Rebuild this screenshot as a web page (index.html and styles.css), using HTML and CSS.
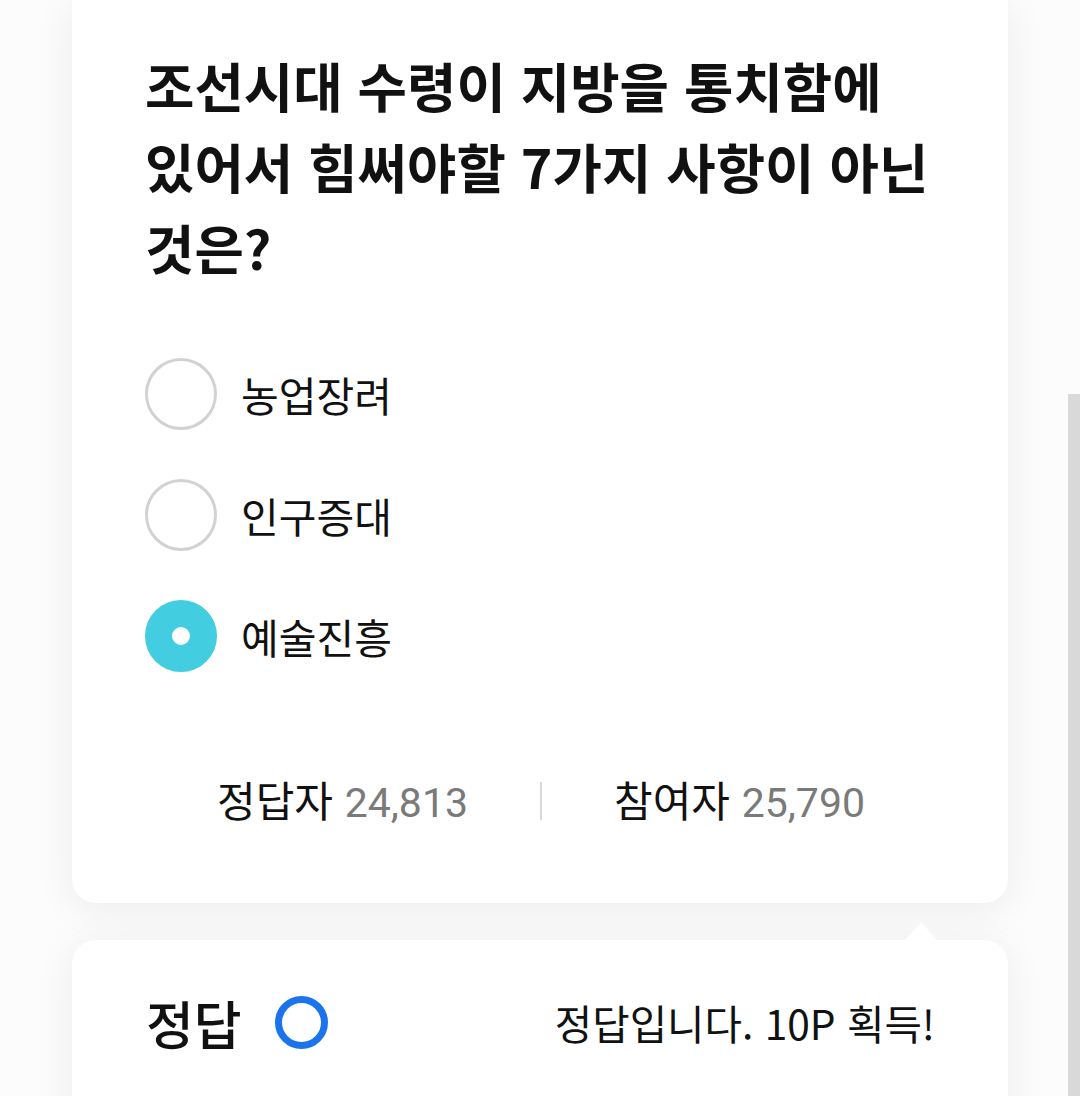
FILE: index.html
```html
<!DOCTYPE html>
<html lang="ko">
<head>
    <meta charset="UTF-8">
    <meta name="viewport" content="width=device-width, initial-scale=1.0">
    <title>오늘의 퀴즈</title>
    <link rel="stylesheet" href="styles.css">
</head>
<body>
    <div class="container">
        <div class="card quiz">
            <h1 class="question">조선시대 수령이 지방을 통치함에<br>있어서 힘써야할 7가지 사항이 아닌<br>것은?</h1>

            <!-- 보기 -->
            <ul class="options">
                <li class="option">
                    <span class="radio"></span>
                    <span class="option-text">농업장려</span>
                </li>
                <li class="option">
                    <span class="radio"></span>
                    <span class="option-text">인구증대</span>
                </li>
                <li class="option selected">
                    <span class="radio"></span>
                    <span class="option-text">예술진흥</span>
                </li>
            </ul>

            <div class="stats">
                <div class="stat">정답자 <span class="num">24,813</span></div>
                <span class="divider"></span>
                <div class="stat">참여자 <span class="num">25,790</span></div>
            </div>
        </div>

        <div class="card answer">
            <div class="answer-label">
                <span>정답</span>
                <span class="ring"></span>
            </div>
            <p class="answer-msg">정답입니다. 10P 획득!</p>
        </div>
    </div>

    <div class="scrollbar"></div>
</body>
</html>
```

FILE: styles.css
```css
:root {
    --text-color: #111;
    --muted-color: #7a7a7a;
    --line-color: #d2d2d2;
    --accent-color: #42cde0;
    --ok-color: #1b74ec;
}

* {
    box-sizing: border-box;
    margin: 0;
    padding: 0;
}

html, body {
    height: 100%;
    overflow: hidden;
}

body {
    font-family: "Noto Sans CJK KR", "Noto Sans", sans-serif;
    background-color: #fcfcfc;
    color: var(--text-color);
}

.container {
    padding: 0 72px;
}

.card {
    background-color: white;
    border-radius: 24px;
    box-shadow: 0 6px 40px rgba(0, 0, 0, 0.07);
}

.quiz {
    border-radius: 0 0 24px 24px;
    padding: 44px 60px 0 73px;
    height: 903px;
}

.question {
    font-size: 53.7px;
    font-weight: 700;
    line-height: 81px;
    white-space: nowrap;
}

.options {
    list-style: none;
    margin-top: 71px;
    display: flex;
    flex-direction: column;
    gap: 49px;
}

.option {
    display: flex;
    align-items: center;
    gap: 24px;
    height: 72px;
}

.radio {
    width: 72px;
    height: 72px;
    border-radius: 50%;
    border: 3px solid var(--line-color);
    flex-shrink: 0;
}

.option.selected .radio {
    border: 27px solid var(--accent-color);
    background-color: white;
}

.option-text {
    font-size: 41px;
    line-height: 1;
}

.stats {
    display: flex;
    justify-content: center;
    align-items: center;
    gap: 72px;
    margin-top: 106px;
    margin-left: -11px;
    font-size: 42px;
    line-height: 1;
}

.num {
    color: var(--muted-color);
    font-family: Roboto, sans-serif;
    font-size: 41px;
}

.divider {
    width: 2px;
    height: 38px;
    background-color: #d9d9d9;
}

.answer {
    position: relative;
    margin-top: 37px;
    height: 200px;
    padding: 0 73px 0 74px;
    display: flex;
    justify-content: space-between;
    align-items: center;
}

.answer::before {
    content: "";
    position: absolute;
    top: -18px;
    right: 71px;
    border-left: 16px solid transparent;
    border-right: 16px solid transparent;
    border-bottom: 18px solid white;
}

.answer-label {
    display: flex;
    align-items: center;
    gap: 33px;
    font-size: 52px;
    font-weight: 500;
    margin-top: -36px;
}

.ring {
    width: 53px;
    height: 53px;
    border-radius: 50%;
    border: 7px solid var(--ok-color);
}

.answer-msg {
    font-size: 40.7px;
    margin-top: -36px;
}

.scrollbar {
    position: fixed;
    top: 394px;
    right: 0;
    bottom: 0;
    width: 12px;
    background-color: #d9d9d9;
}
```
